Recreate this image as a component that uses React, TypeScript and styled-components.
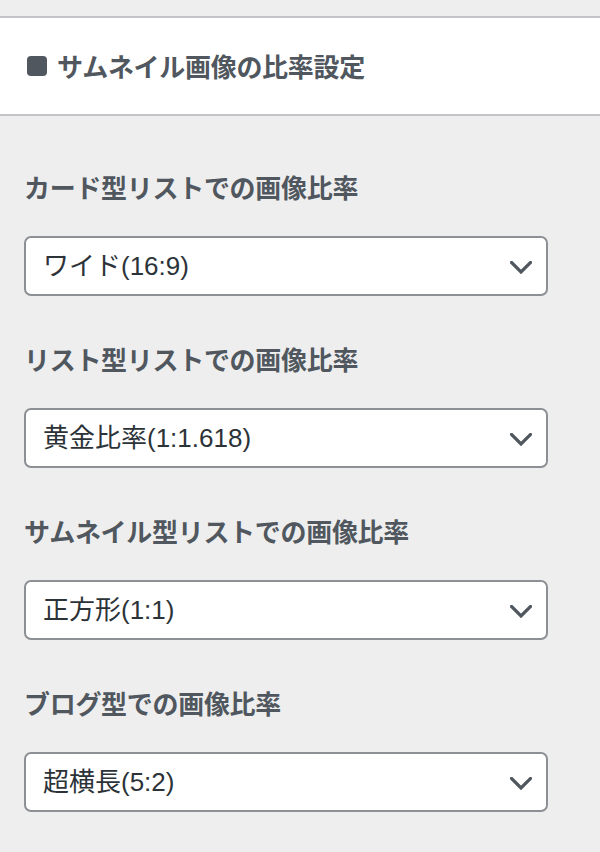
import React from "react";
import styled, { createGlobalStyle } from "styled-components";

const GlobalStyle = createGlobalStyle`
  html, body {
    margin: 0;
    padding: 0;
    background: #eeeeee;
  }
  body {
    font-family: "Liberation Sans", "Noto Sans CJK JP", sans-serif;
    -webkit-font-smoothing: antialiased;
  }
`;

const Page = styled.div`
  width: 600px;
  min-height: 852px;
  background: #eeeeee;
  padding-top: 16px;
  box-sizing: border-box;
`;

const SectionHeader = styled.div`
  display: flex;
  align-items: center;
  gap: 10px;
  height: 96px;
  padding: 0 27px;
  background: #ffffff;
  border-top: 2px solid #c3c4c7;
  border-bottom: 2px solid #c3c4c7;
`;

const Square = styled.span`
  width: 20px;
  height: 20px;
  border-radius: 4px;
  background: #50575e;
  flex: none;
`;

const HeaderTitle = styled.h3`
  margin: 0;
  font-family: "Noto Sans CJK JP", sans-serif;
  font-weight: 700;
  font-size: 26px;
  letter-spacing: -0.3px;
  color: #50575e;
  line-height: 1;
`;

const Controls = styled.div`
  display: flex;
  flex-direction: column;
  padding: 51px 52px 0 24px;
  gap: 43px;
`;

const Control = styled.div`
  display: flex;
  flex-direction: column;
  gap: 29px;
`;

const Label = styled.label`
  display: block;
  font-family: "Noto Sans CJK JP", sans-serif;
  font-weight: 700;
  font-size: 26px;
  letter-spacing: -0.3px;
  line-height: 40px;
  height: 40px;
  color: #50575e;
`;

const SelectWrap = styled.div`
  position: relative;
  width: 524px;
  height: 60px;
`;

const Select = styled.select`
  appearance: none;
  -webkit-appearance: none;
  width: 100%;
  height: 100%;
  box-sizing: border-box;
  margin: 0;
  padding: 0 60px 0 17px;
  border: 2px solid #8c8f94;
  border-radius: 7px;
  background: #ffffff;
  color: #2c3338;
  font-family: "Liberation Sans", "Noto Sans CJK JP", sans-serif;
  font-size: 26px;
  line-height: 56px;
  outline: none;
`;

const Chevron = styled.svg`
  position: absolute;
  right: 16px;
  top: 50%;
  margin-top: -5px;
  width: 22px;
  height: 13px;
  pointer-events: none;
`;

const options = [
  {
    label: "カード型リストでの画像比率",
    value: "ワイド(16:9)",
  },
  {
    label: "リスト型リストでの画像比率",
    value: "黄金比率(1:1.618)",
  },
  {
    label: "サムネイル型リストでの画像比率",
    value: "正方形(1:1)",
  },
  {
    label: "ブログ型での画像比率",
    value: "超横長(5:2)",
  },
];

const allChoices = [
  "ワイド(16:9)",
  "黄金比率(1:1.618)",
  "正方形(1:1)",
  "超横長(5:2)",
];

export default function App() {
  return (
    <>
      <GlobalStyle />
      <Page>
        <SectionHeader>
          <Square />
          <HeaderTitle>サムネイル画像の比率設定</HeaderTitle>
        </SectionHeader>
        <Controls>
          {options.map((o, i) => (
            <Control key={i}>
              <Label htmlFor={`ratio-${i}`}>{o.label}</Label>
              <SelectWrap>
                <Select id={`ratio-${i}`} defaultValue={o.value}>
                  {allChoices.map((c) => (
                    <option key={c} value={c}>
                      {c}
                    </option>
                  ))}
                </Select>
                <Chevron viewBox="0 0 22 13" aria-hidden="true">
                  <polyline
                    points="1.5,1.5 11,11 20.5,1.5"
                    fill="none"
                    stroke="#50575e"
                    strokeWidth="3.2"
                    strokeLinecap="square"
                    strokeLinejoin="miter"
                  />
                </Chevron>
              </SelectWrap>
            </Control>
          ))}
        </Controls>
      </Page>
    </>
  );
}
